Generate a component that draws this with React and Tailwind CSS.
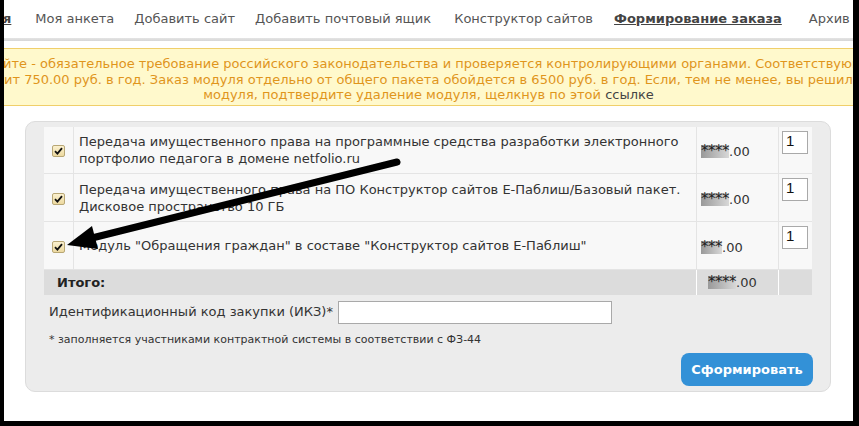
import React from "react";

const F = "font-['DejaVu_Sans',Verdana,sans-serif]";

function Check() {
  return (
    <span className="inline-flex w-[13px] h-[12px] rounded-[2px] border border-[#b8a775] bg-gradient-to-b from-[#fbf1cf] to-[#ecd9a0] items-center justify-center">
      <svg width="9" height="8" viewBox="0 0 9 8">
        <path d="M1 4.2 L3.4 6.6 L8 1.2" fill="none" stroke="#111" strokeWidth="1.8" />
      </svg>
    </span>
  );
}

function Stars({ n }) {
  return (
    <span className="inline-flex items-baseline">
      <span className="bg-gradient-to-r from-[#999] to-[#d8d8d8] text-[#222] text-[15px] leading-[13px] tracking-[-0.5px]">{"*".repeat(n)}</span>
      <span>.00</span>
    </span>
  );
}

function Qty() {
  return (
    <div className="w-[26px] h-[23px] bg-white border border-[#a9a9a9] text-[15px] leading-[18px] pl-[3px] font-['Liberation_Sans',Arial,sans-serif] text-[#111]">
      1
    </div>
  );
}

const rows = [
  {
    text: (
      <>
        Передача имущественного права на программные средства разработки электронного
        <br />
        портфолио педагога в домене netfolio.ru
      </>
    ),
    h: "h-[47px]",
    n: 4,
  },
  {
    text: (
      <>
        Передача имущественного права на ПО Конструктор сайтов Е-Паблиш/Базовый пакет.
        <br />
        Дисковое пространство 10 ГБ
      </>
    ),
    h: "h-[48px]",
    n: 4,
  },
  {
    text: <>Модуль "Обращения граждан" в составе "Конструктор сайтов Е-Паблиш"</>,
    h: "h-[48px]",
    n: 3,
  },
];

export default function App() {
  return (
    <div className={`w-[859px] h-[426px] bg-black pl-[4px] pr-[6px] pb-[5px] relative overflow-hidden ${F}`}>
      <div className="w-[849px] h-[421px] bg-white flex flex-col overflow-hidden">
        {/* nav */}
        <div className="h-[38px] flex items-center whitespace-nowrap text-[13px] text-[#555] overflow-hidden">
          <span className="font-bold underline text-[#444] -ml-[1px]">я</span>
          <span className="ml-[24px]">Моя анкета</span>
          <span className="ml-[20px]">Добавить сайт</span>
          <span className="ml-[20px]">Добавить почтовый ящик</span>
          <span className="ml-[23px]">Конструктор сайтов</span>
          <span className="ml-[21px] font-bold underline text-[#444]">Формирование заказа</span>
          <span className="ml-[27px]">Архив заказов</span>
        </div>
        <div className="h-[3px] bg-gradient-to-b from-[#e4e4e4] to-[#d6d6d6]" />
        {/* notice */}
        <div className="mt-[7px] h-[58px] bg-[#fff9cc] border-y border-[#f0cf6a] text-[13px] leading-[15.5px] text-[#e0951c] pt-[7px] whitespace-nowrap overflow-hidden">
          <div className="-ml-[1px]">йте - обязательное требование российского законодательства и проверяется контролирующими органами. Соответствующий модуль</div>
          <div>ит 750.00 руб. в год. Заказ модуля отдельно от общего пакета обойдется в 6500 руб. в год. Если, тем не менее, вы решили отказаться от</div>
          <div className="text-center">
            модуля, подтвердите удаление модуля, щелкнув по этой <span className="text-[#444]">ссылке</span>
          </div>
        </div>
        {/* panel */}
        <div className="mt-[15px] ml-[21px] w-[806px] h-[271px] bg-[#ececec] border border-[#dcdcdc] rounded-[10px] pt-[5px] pl-[18px] pr-[17px] flex flex-col text-[13px] text-[#333]">
          <div className="w-[768px] flex flex-col">
            {rows.map((r, i) => (
              <div key={i} className={`grid grid-cols-[30px_623px_82px_33px] ${r.h} bg-[#f8f8f8] border-b border-[#e4e4e4]`}>
                <div className="flex items-center justify-center border-r border-[#e4e4e4] pt-[2px]">
                  <Check />
                </div>
                <div className="flex items-center pl-[5px] leading-[17px] border-r border-[#e4e4e4]">
                  <div>{r.text}</div>
                </div>
                <div className="flex items-center pl-[4px] pt-[4px] border-r border-[#e4e4e4]">
                  <Stars n={r.n} />
                </div>
                <div className="pt-[4px] pl-[3px]">
                  <Qty />
                </div>
              </div>
            ))}
            <div className="grid grid-cols-[653px_82px_33px] h-[25px] bg-[#dcdcdc]">
              <div className="flex items-center pl-[13px] font-bold text-[#222] border-r border-white">Итого:</div>
              <div className="flex items-center pl-[11px] border-r border-white">
                <Stars n={4} />
              </div>
              <div />
            </div>
          </div>
          <div className="mt-[5px] flex items-center pl-[5px] h-[24px]">
            <span className="text-[#333]">Идентификационный код закупки (ИКЗ)*</span>
            <div className="ml-[5px] w-[274px] h-[23px] bg-white border border-[#a9a9a9]" />
          </div>
          <div className="mt-[9px] pl-[5px] text-[11px] leading-[14px] text-[#333]">
            * заполняется участниками контрактной системы в соответствии с ФЗ-44
          </div>
          <div className="mt-[6px] flex justify-end">
            <button className="w-[132px] h-[33px] rounded-[8px] bg-[#3391d7] text-white font-bold text-[13px]">
              Сформировать
            </button>
          </div>
        </div>
      </div>
      {/* arrow overlay */}
      <svg className="absolute left-0 top-0 pointer-events-none" width="859" height="426" viewBox="0 0 859 426">
        <line x1="397" y1="162" x2="92" y2="238" stroke="#000" strokeWidth="7" strokeLinecap="round" />
        <polygon points="67,245 98,249 92,226" fill="#000" />
      </svg>
    </div>
  );
}
